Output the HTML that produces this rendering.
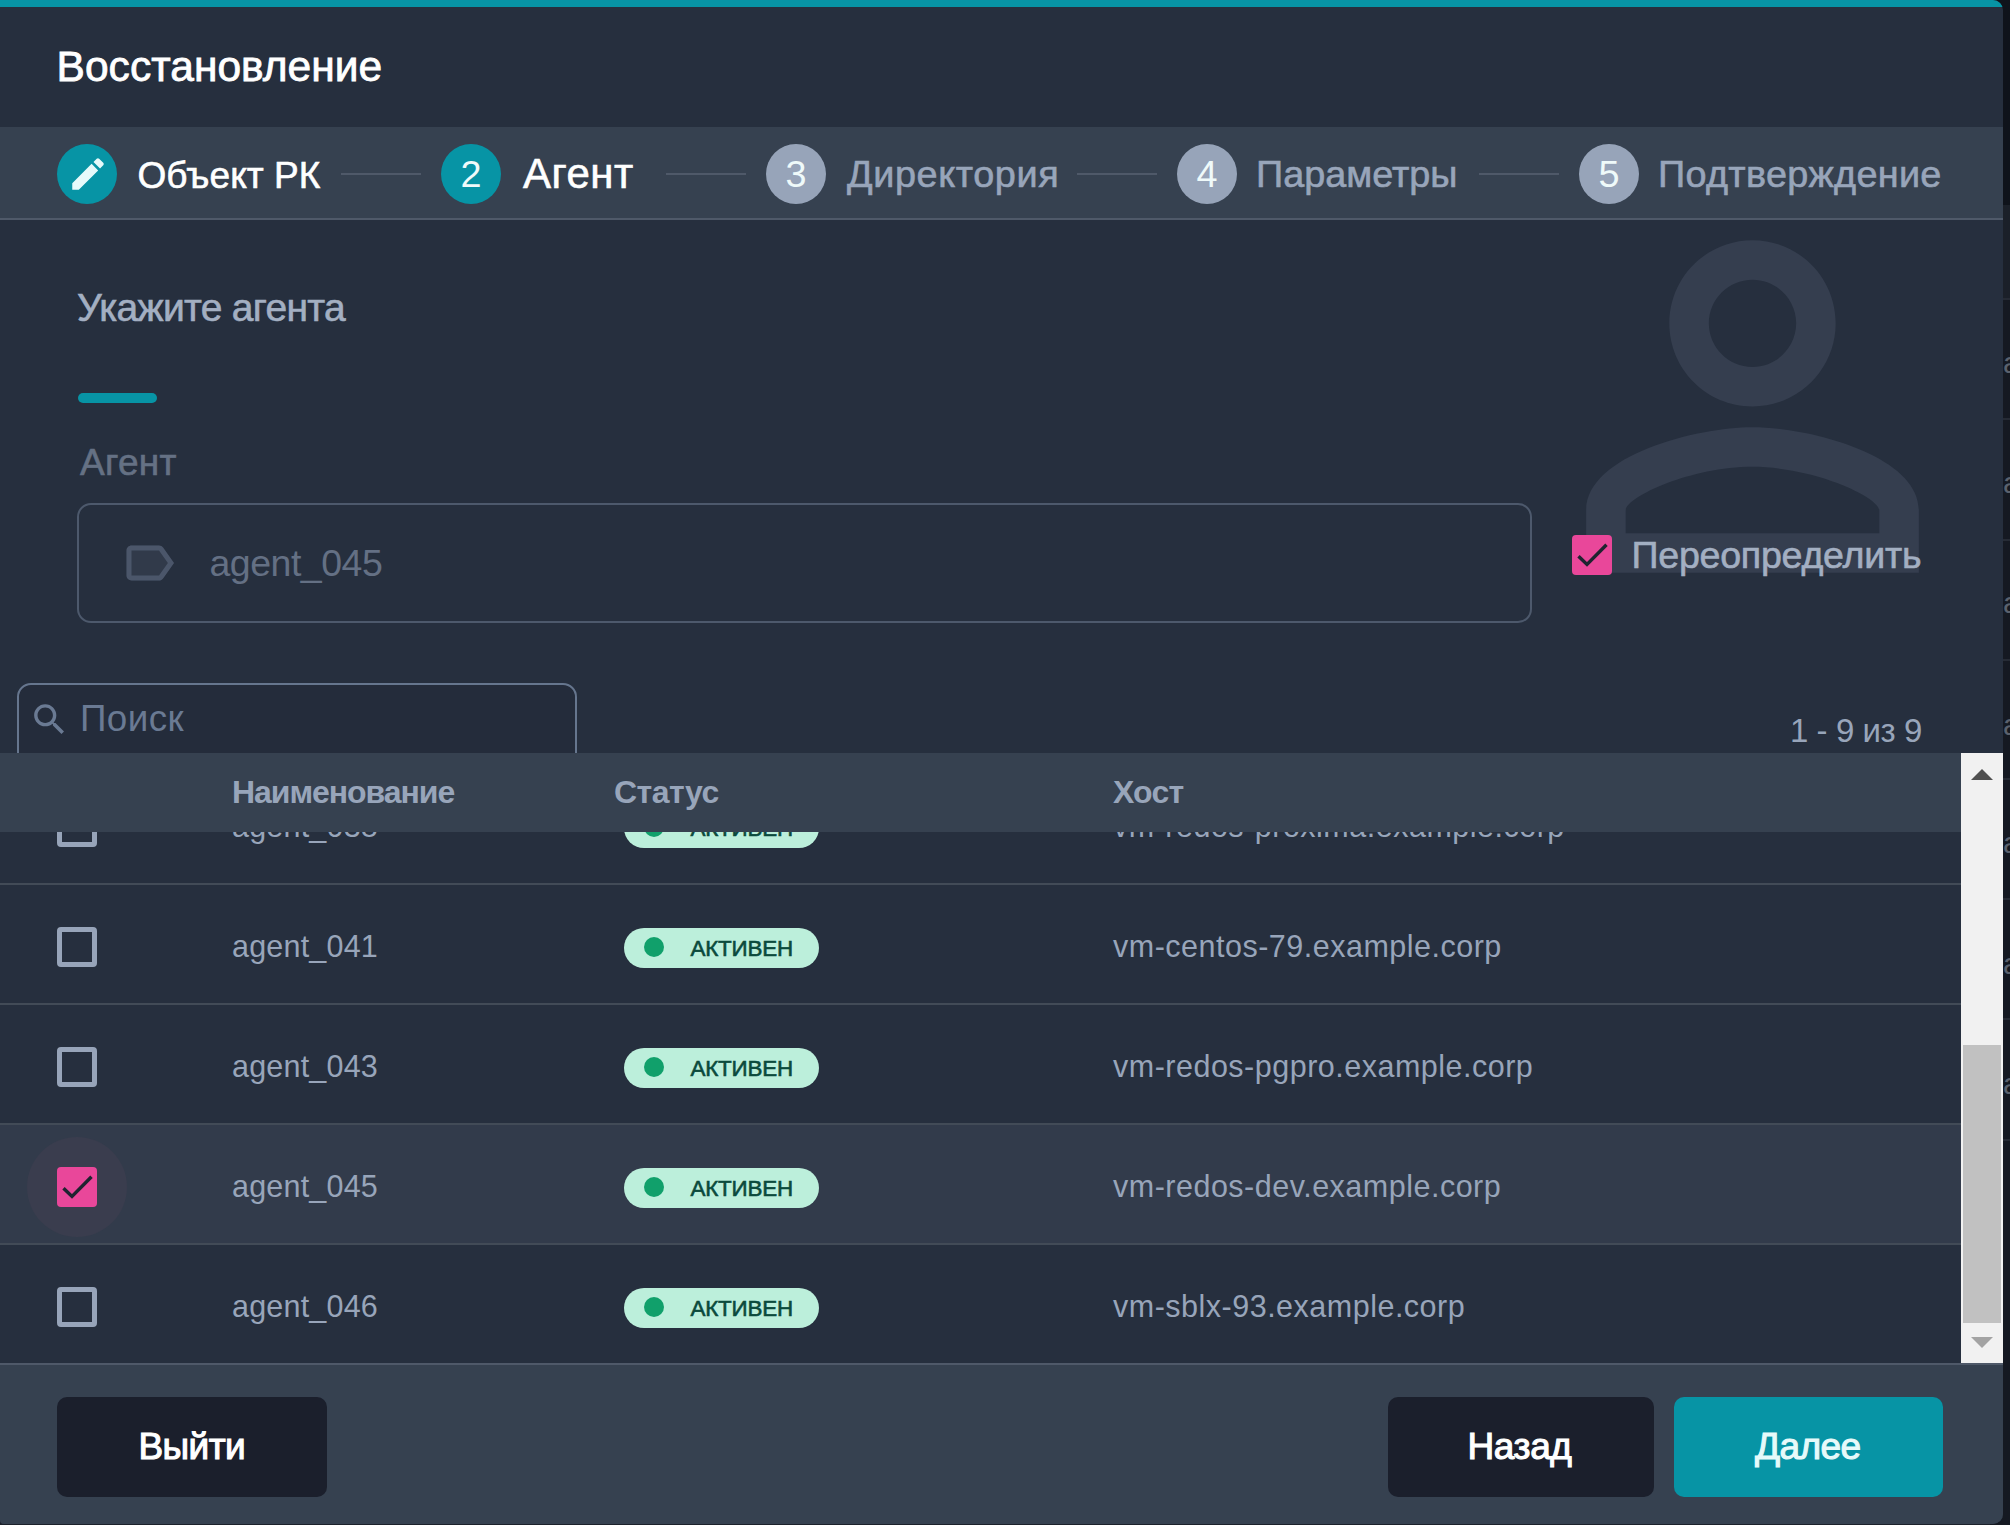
<!DOCTYPE html><html><head><meta charset="utf-8"><style>
html,body{margin:0;padding:0;width:2010px;height:1525px;overflow:hidden;background:#1c212b;}
.t{position:absolute;white-space:nowrap;line-height:1;font-family:"Liberation Sans",sans-serif;}
.a{position:absolute;}
#dlg{position:absolute;left:0;top:0;width:2003px;height:1524px;background:#262f3e;border-radius:0 10px 10px 4px;overflow:hidden;}
</style></head><body>
<div class="a" style="left:1990px;top:0;width:20px;height:205px;background:#0f131b"></div>
<div class="a" style="left:1990px;top:205px;width:20px;height:93px;background:#1b2029"></div>
<div class="a" style="left:1990px;top:298px;width:20px;height:1227px;background:#151922"></div>
<div class="a" style="left:1990px;top:298px;width:20px;height:2px;background:#262b35"></div>
<div class="a" style="left:1990px;top:418px;width:20px;height:2px;background:#262b35"></div>
<div class="a" style="left:1990px;top:539px;width:20px;height:2px;background:#262b35"></div>
<div class="a" style="left:1990px;top:659px;width:20px;height:2px;background:#262b35"></div>
<div class="a" style="left:1990px;top:778px;width:20px;height:2px;background:#262b35"></div>
<div class="a" style="left:1990px;top:898px;width:20px;height:2px;background:#262b35"></div>
<div class="a" style="left:1990px;top:1018px;width:20px;height:2px;background:#262b35"></div>
<div class="a" style="left:1990px;top:1139px;width:20px;height:2px;background:#262b35"></div>
<div class="t" style="left:2003px;top:347.5px;font-size:30px;color:#5a616d">a</div>
<div class="t" style="left:2003px;top:467.5px;font-size:30px;color:#5a616d">a</div>
<div class="t" style="left:2003px;top:587.5px;font-size:30px;color:#5a616d">a</div>
<div class="t" style="left:2003px;top:709.5px;font-size:30px;color:#5a616d">a</div>
<div class="t" style="left:2003px;top:827.5px;font-size:30px;color:#5a616d">a</div>
<div class="t" style="left:2003px;top:948.5px;font-size:30px;color:#5a616d">a</div>
<div class="t" style="left:2003px;top:1068.5px;font-size:30px;color:#5a616d">a</div>
<div id="dlg">
<div class="a" style="left:0;top:0;width:2003px;height:7px;background:#0794a5"></div>
<div class="t" style="left:56.5px;top:46.0px;font-size:42.5px;color:#ffffff;font-weight:400;letter-spacing:0.05px;-webkit-text-stroke:0.8px currentColor;">Восстановление</div>
<div class="a" style="left:0;top:127px;width:2003px;height:91px;background:#364150"></div>
<div class="a" style="left:0;top:218px;width:2003px;height:2px;background:#4f5969"></div>
<div class="a" style="left:57px;top:144px;width:60px;height:60px;border-radius:50%;background:#0794a5"></div>
<div class="a" style="left:441px;top:144px;width:60px;height:60px;border-radius:50%;background:#0794a5"></div>
<div class="t" style="left:441px;top:156.3px;width:60px;text-align:center;font-size:37.8px;color:#effafa">2</div>
<div class="a" style="left:766px;top:144px;width:60px;height:60px;border-radius:50%;background:#97a4b9"></div>
<div class="t" style="left:766px;top:156.3px;width:60px;text-align:center;font-size:37.8px;color:#effafa">3</div>
<div class="a" style="left:1177px;top:144px;width:60px;height:60px;border-radius:50%;background:#97a4b9"></div>
<div class="t" style="left:1177px;top:156.3px;width:60px;text-align:center;font-size:37.8px;color:#effafa">4</div>
<div class="a" style="left:1579px;top:144px;width:60px;height:60px;border-radius:50%;background:#97a4b9"></div>
<div class="t" style="left:1579px;top:156.3px;width:60px;text-align:center;font-size:37.8px;color:#effafa">5</div>
<svg class="a" style="left:67px;top:153px" width="42" height="42" viewBox="0 0 24 24"><path fill="#e6fafa" d="M3 17.25V21h3.75L17.81 9.94l-3.75-3.75L3 17.25zM20.71 7.04a.996.996 0 0 0 0-1.41l-2.34-2.34a.996.996 0 0 0-1.41 0l-1.83 1.83 3.75 3.75 1.83-1.83z"/></svg>
<div class="a" style="left:341px;top:173px;width:80px;height:2px;background:#4f5969"></div>
<div class="a" style="left:666px;top:173px;width:80px;height:2px;background:#4f5969"></div>
<div class="a" style="left:1077px;top:173px;width:80px;height:2px;background:#4f5969"></div>
<div class="a" style="left:1479px;top:173px;width:80px;height:2px;background:#4f5969"></div>
<div class="t" style="left:137.5px;top:156.7px;font-size:37px;color:#ffffff;font-weight:400;letter-spacing:0.05px;-webkit-text-stroke:0.6px currentColor;">Объект РК</div>
<div class="t" style="left:523.0px;top:152.6px;font-size:42px;color:#ffffff;font-weight:400;letter-spacing:0.5px;-webkit-text-stroke:0.6px currentColor;">Агент</div>
<div class="t" style="left:847.0px;top:156.0px;font-size:37.8px;color:#98a5ba;font-weight:400;letter-spacing:0.6px;-webkit-text-stroke:0.6px currentColor;">Директория</div>
<div class="t" style="left:1256.0px;top:156.0px;font-size:37.8px;color:#98a5ba;font-weight:400;letter-spacing:0px;-webkit-text-stroke:0.6px currentColor;">Параметры</div>
<div class="t" style="left:1658.0px;top:156.0px;font-size:37.8px;color:#98a5ba;font-weight:400;letter-spacing:0.3px;-webkit-text-stroke:0.6px currentColor;">Подтверждение</div>
<svg class="a" style="left:1503px;top:157px" width="499" height="499" viewBox="0 0 24 24"><path fill="#353e4f" d="M12 5.9c1.16 0 2.1.94 2.1 2.1s-.94 2.1-2.1 2.1S9.9 9.16 9.9 8s.94-2.1 2.1-2.1m0 9c2.97 0 6.1 1.46 6.1 2.1v1.1H5.9V17c0-.64 3.13-2.1 6.1-2.1M12 4C9.79 4 8 5.79 8 8s1.79 4 4 4 4-1.79 4-4-1.79-4-4-4zm0 9c-2.67 0-8 1.34-8 4v3h16v-3c0-2.66-5.33-4-8-4z"/></svg>
<div class="t" style="left:77.0px;top:288.0px;font-size:39px;color:#a3afc2;font-weight:400;letter-spacing:-0.7px;-webkit-text-stroke:0.6px currentColor;">Укажите агента</div>
<div class="a" style="left:78px;top:393px;width:79px;height:10px;border-radius:5px;background:#0794a5"></div>
<div class="t" style="left:80.0px;top:444.3px;font-size:37px;color:#657184;font-weight:400;letter-spacing:0.3px;-webkit-text-stroke:0.6px currentColor;">Агент</div>
<div class="a" style="left:77px;top:503px;width:1451px;height:116px;border:2px solid #4d596c;border-radius:14px;"></div>
<svg class="a" style="left:118.5px;top:533px" width="60" height="60" viewBox="0 0 24 24"><path fill="#313a4a" stroke="#4b566a" stroke-width="0" d="M17.63 5.84C17.27 5.33 16.67 5 16 5L5 5.01C3.9 5.01 3 5.9 3 7v10c0 1.1.9 1.99 2 1.99L16 19c.67 0 1.27-.33 1.63-.84L22 12l-4.37-6.16z"/><path fill="#4b566a" d="M17.63 5.84C17.27 5.33 16.67 5 16 5L5 5.01C3.9 5.01 3 5.9 3 7v10c0 1.1.9 1.99 2 1.99L16 19c.67 0 1.27-.33 1.63-.84L22 12l-4.37-6.16zM16 17H5V7h11l3.55 5L16 17z"/></svg>
<div class="t" style="left:209.5px;top:544.6px;font-size:37.5px;color:#647084;font-weight:400;letter-spacing:-0.5px;">agent_045</div>
<div class="a" style="left:1572px;top:535px;width:40px;height:40px;border-radius:4px;background:#e9479a"></div>
<svg class="a" style="left:1572px;top:535px" width="40" height="40" viewBox="0 0 40 40"><path d="M6.5 21.2 L15 29.4 L34.5 9.8" fill="none" stroke="#1f2430" stroke-width="3.4"/></svg>
<div class="t" style="left:1631.5px;top:536.6px;font-size:37.6px;color:#a3afc2;font-weight:400;letter-spacing:-0.25px;-webkit-text-stroke:0.6px currentColor;">Переопределить</div>
<div class="a" style="left:17px;top:683px;width:556px;height:120px;border:2px solid #66768e;border-radius:14px;background:#242c3b;"></div>
<svg class="a" style="left:29px;top:699px" width="41" height="41" viewBox="0 0 24 24"><path fill="#6a7a93" d="M15.5 14h-.79l-.28-.27C15.41 12.59 16 11.11 16 9.5 16 5.91 13.09 3 9.5 3S3 5.91 3 9.5 5.91 16 9.5 16c1.61 0 3.09-.59 4.23-1.57l.27.28v.79l5 4.99L20.49 19l-4.99-5zm-6 0C7.01 14 5 11.99 5 9.5S7.01 5 9.5 5 14 7.01 14 9.5 11.99 14 9.5 14z"/></svg>
<div class="t" style="left:80.0px;top:701.0px;font-size:36.8px;color:#6a7a93;font-weight:400;letter-spacing:0.4px;">Поиск</div>
<div class="t" style="left:1790.0px;top:713.5px;font-size:33px;color:#98a5ba;font-weight:400;letter-spacing:-0.45px;">1 - 9 из 9</div>
<div class="a" style="left:57px;top:807px;width:30px;height:30px;border-radius:4px;border:5px solid #97a4b9"></div>
<div class="t" style="left:232.0px;top:811.4px;font-size:30.5px;color:#98a5ba;font-weight:400;letter-spacing:0.2px;">agent_038</div>
<div class="t" style="left:1113.0px;top:811.4px;font-size:30.5px;color:#98a5ba;font-weight:400;letter-spacing:0.5px;">vm-redos-proxima.example.corp</div>
<div class="a" style="left:624px;top:808px;width:195px;height:40px;border-radius:20px;background:#bcefdb"></div>
<div class="a" style="left:644px;top:817px;width:20px;height:20px;border-radius:50%;background:#11a06b"></div>
<div class="t" style="left:690.5px;top:818.2px;font-size:22.4px;color:#0b4a3c;font-weight:400;letter-spacing:-0.2px;-webkit-text-stroke:0.6px currentColor;">АКТИВЕН</div>
<div class="a" style="left:0;top:883px;width:1961px;height:2px;background:#424b57"></div>
<div class="a" style="left:57px;top:927px;width:30px;height:30px;border-radius:4px;border:5px solid #97a4b9"></div>
<div class="t" style="left:232.0px;top:931.4px;font-size:30.5px;color:#98a5ba;font-weight:400;letter-spacing:0.2px;">agent_041</div>
<div class="t" style="left:1113.0px;top:931.4px;font-size:30.5px;color:#98a5ba;font-weight:400;letter-spacing:0.5px;">vm-centos-79.example.corp</div>
<div class="a" style="left:624px;top:928px;width:195px;height:40px;border-radius:20px;background:#bcefdb"></div>
<div class="a" style="left:644px;top:937px;width:20px;height:20px;border-radius:50%;background:#11a06b"></div>
<div class="t" style="left:690.5px;top:938.2px;font-size:22.4px;color:#0b4a3c;font-weight:400;letter-spacing:-0.2px;-webkit-text-stroke:0.6px currentColor;">АКТИВЕН</div>
<div class="a" style="left:0;top:1003px;width:1961px;height:2px;background:#424b57"></div>
<div class="a" style="left:57px;top:1047px;width:30px;height:30px;border-radius:4px;border:5px solid #97a4b9"></div>
<div class="t" style="left:232.0px;top:1051.4px;font-size:30.5px;color:#98a5ba;font-weight:400;letter-spacing:0.2px;">agent_043</div>
<div class="t" style="left:1113.0px;top:1051.4px;font-size:30.5px;color:#98a5ba;font-weight:400;letter-spacing:0.5px;">vm-redos-pgpro.example.corp</div>
<div class="a" style="left:624px;top:1048px;width:195px;height:40px;border-radius:20px;background:#bcefdb"></div>
<div class="a" style="left:644px;top:1057px;width:20px;height:20px;border-radius:50%;background:#11a06b"></div>
<div class="t" style="left:690.5px;top:1058.2px;font-size:22.4px;color:#0b4a3c;font-weight:400;letter-spacing:-0.2px;-webkit-text-stroke:0.6px currentColor;">АКТИВЕН</div>
<div class="a" style="left:0;top:1123px;width:1961px;height:2px;background:#424b57"></div>
<div class="a" style="left:0;top:1125px;width:1961px;height:119px;background:#323b4b"></div>
<div class="a" style="left:27px;top:1137px;width:100px;height:100px;border-radius:50%;background:#3a3d4e"></div>
<div class="a" style="left:57px;top:1167px;width:40px;height:40px;border-radius:4px;background:#e9479a"></div>
<svg class="a" style="left:57px;top:1167px" width="40" height="40" viewBox="0 0 40 40"><path d="M6.5 21.2 L15 29.4 L34.5 9.8" fill="none" stroke="#1f2430" stroke-width="3.4"/></svg>
<div class="t" style="left:232.0px;top:1171.4px;font-size:30.5px;color:#98a5ba;font-weight:400;letter-spacing:0.2px;">agent_045</div>
<div class="t" style="left:1113.0px;top:1171.4px;font-size:30.5px;color:#98a5ba;font-weight:400;letter-spacing:0.5px;">vm-redos-dev.example.corp</div>
<div class="a" style="left:624px;top:1168px;width:195px;height:40px;border-radius:20px;background:#bcefdb"></div>
<div class="a" style="left:644px;top:1177px;width:20px;height:20px;border-radius:50%;background:#11a06b"></div>
<div class="t" style="left:690.5px;top:1178.2px;font-size:22.4px;color:#0b4a3c;font-weight:400;letter-spacing:-0.2px;-webkit-text-stroke:0.6px currentColor;">АКТИВЕН</div>
<div class="a" style="left:0;top:1243px;width:1961px;height:2px;background:#424b57"></div>
<div class="a" style="left:57px;top:1287px;width:30px;height:30px;border-radius:4px;border:5px solid #97a4b9"></div>
<div class="t" style="left:232.0px;top:1291.4px;font-size:30.5px;color:#98a5ba;font-weight:400;letter-spacing:0.2px;">agent_046</div>
<div class="t" style="left:1113.0px;top:1291.4px;font-size:30.5px;color:#98a5ba;font-weight:400;letter-spacing:0.5px;">vm-sblx-93.example.corp</div>
<div class="a" style="left:624px;top:1288px;width:195px;height:40px;border-radius:20px;background:#bcefdb"></div>
<div class="a" style="left:644px;top:1297px;width:20px;height:20px;border-radius:50%;background:#11a06b"></div>
<div class="t" style="left:690.5px;top:1298.2px;font-size:22.4px;color:#0b4a3c;font-weight:400;letter-spacing:-0.2px;-webkit-text-stroke:0.6px currentColor;">АКТИВЕН</div>
<div class="a" style="left:0;top:1363px;width:1961px;height:2px;background:#424b57"></div>
<div class="a" style="left:0;top:753px;width:1961px;height:79px;background:#364150"></div>
<div class="t" style="left:232.0px;top:775.9px;font-size:32px;color:#98a5ba;font-weight:700;letter-spacing:-1.05px;">Наименование</div>
<div class="t" style="left:614.0px;top:775.9px;font-size:32px;color:#98a5ba;font-weight:700;letter-spacing:-0.5px;">Статус</div>
<div class="t" style="left:1113.0px;top:775.9px;font-size:32px;color:#98a5ba;font-weight:700;letter-spacing:-0.8px;">Хост</div>
<div class="a" style="left:1961px;top:753px;width:42px;height:612px;background:#f1f1f1"></div>
<div class="a" style="left:1963px;top:1045px;width:38px;height:278px;background:#c1c1c1"></div>
<svg class="a" style="left:1971px;top:769px" width="22" height="12"><path d="M0 11 L11 0 L22 11 Z" fill="#505050"/></svg>
<svg class="a" style="left:1971px;top:1337px" width="22" height="12"><path d="M0 0 L22 0 L11 11 Z" fill="#a3a3a3"/></svg>
<div class="a" style="left:0;top:1363px;width:2003px;height:2px;background:#4f5969"></div>
<div class="a" style="left:0;top:1365px;width:2003px;height:160px;background:#364150"></div>
<div class="a" style="left:57px;top:1397px;width:270px;height:100px;border-radius:10px;background:#1b1f2c"></div>
<div class="a" style="left:1388px;top:1397px;width:266px;height:100px;border-radius:10px;background:#1b1f2c"></div>
<div class="a" style="left:1674px;top:1397px;width:269px;height:100px;border-radius:10px;background:#0794a5"></div>
<div class="t" style="left:138.5px;top:1428.2px;font-size:37px;color:#ffffff;font-weight:400;letter-spacing:-0.6px;-webkit-text-stroke:1.1px currentColor;">Выйти</div>
<div class="t" style="left:1467.5px;top:1427.7px;font-size:37px;color:#ffffff;font-weight:400;letter-spacing:-0.4px;-webkit-text-stroke:1.1px currentColor;">Назад</div>
<div class="t" style="left:1755.0px;top:1427.7px;font-size:37px;color:#e6fafa;font-weight:400;letter-spacing:-0.6px;-webkit-text-stroke:1.1px currentColor;">Далее</div>
</div></body></html>
